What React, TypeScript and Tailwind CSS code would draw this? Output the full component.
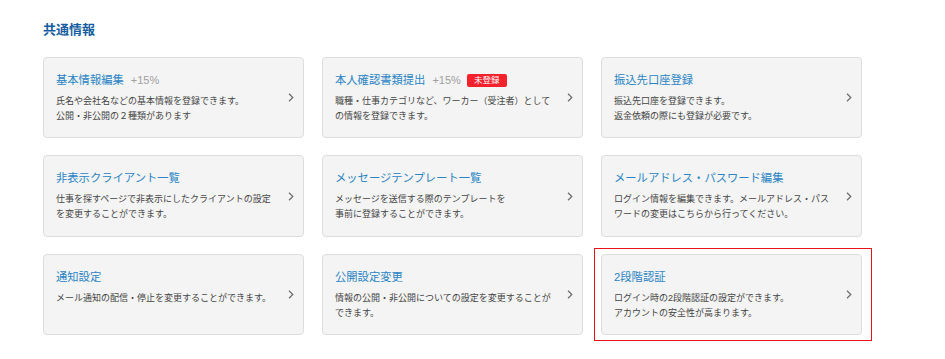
const items: { title: string; lines: string[]; badge?: boolean; bonus?: boolean; marked?: boolean }[] = [
  { title: "基本情報編集", bonus: true, lines: ["氏名や会社名などの基本情報を登録できます。", "公開・非公開の２種類があります"] },
  { title: "本人確認書類提出", bonus: true, badge: true, lines: ["職種・仕事カテゴリなど、ワーカー（受注者）として", "の情報を登録できます。"] },
  { title: "振込先口座登録", lines: ["振込先口座を登録できます。", "返金依頼の際にも登録が必要です。"] },
  { title: "非表示クライアント一覧", lines: ["仕事を探すページで非表示にしたクライアントの設定", "を変更することができます。"] },
  { title: "メッセージテンプレート一覧", lines: ["メッセージを送信する際のテンプレートを", "事前に登録することができます。"] },
  { title: "メールアドレス・パスワード編集", lines: ["ログイン情報を編集できます。メールアドレス・パス", "ワードの変更はこちらから行ってください。"] },
  { title: "通知設定", lines: ["メール通知の配信・停止を変更することができます。"] },
  { title: "公開設定変更", lines: ["情報の公開・非公開についての設定を変更することが", "できます。"] },
  { title: "2段階認証", marked: true, lines: ["ログイン時の2段階認証の設定ができます。", "アカウントの安全性が高まります。"] },
];

function Chevron() {
  return (
    <svg width="6" height="9" viewBox="0 0 6 9" fill="none" className="shrink-0">
      <path d="M1 0.8L4.8 4.5L1 8.2" stroke="#6b6b6b" strokeWidth="1.2" />
    </svg>
  );
}

export default function App() {
  return (
    <div
      className="h-[359px] w-[945px] bg-white pl-[43px] pt-[21px]"
      style={{ fontFamily: '"Liberation Sans", "Noto Sans CJK JP", sans-serif' }}
    >
      <h2 className="text-[13px] font-bold leading-[17px] text-[#135c9f]">共通情報</h2>
      <div className="mt-[19px] grid grid-cols-[repeat(3,261px)] grid-rows-[81px_82px_81px] gap-x-[18px] gap-y-[17px]">
        {items.map((it) => (
          <div
            key={it.title}
            className="relative flex cursor-pointer items-center rounded-[4px] border border-[#dddddd] bg-[#f4f4f4] pl-[12px] pr-[9px]"
          >
            <div className="flex-1 self-start pt-[14px]">
              <div className="flex items-center leading-[16px]">
                <span className="text-[11.3px] text-[#2a84c4]">{it.title}</span>
                {it.bonus && <span className="ml-[7px] text-[11px] text-[#a0a0a0]">+15%</span>}
                {it.badge && (
                  <span className="ml-[6px] flex h-[13px] w-[40px] items-center justify-center rounded-[2px] bg-[#f5222d] text-[8.5px] leading-none text-white">
                    未登録
                  </span>
                )}
              </div>
              <p className="mt-[6px] whitespace-nowrap text-[9px] leading-[15px] text-[#444444]">
                {it.lines.map((l, i) => (
                  <span key={i} className="block">
                    {l}
                  </span>
                ))}
              </p>
            </div>
            <Chevron />
            {it.marked && (
              <div className="pointer-events-none absolute -bottom-[7px] -left-[8px] -right-[11px] -top-[7px] border border-[#e8141a]" />
            )}
          </div>
        ))}
      </div>
    </div>
  );
}
